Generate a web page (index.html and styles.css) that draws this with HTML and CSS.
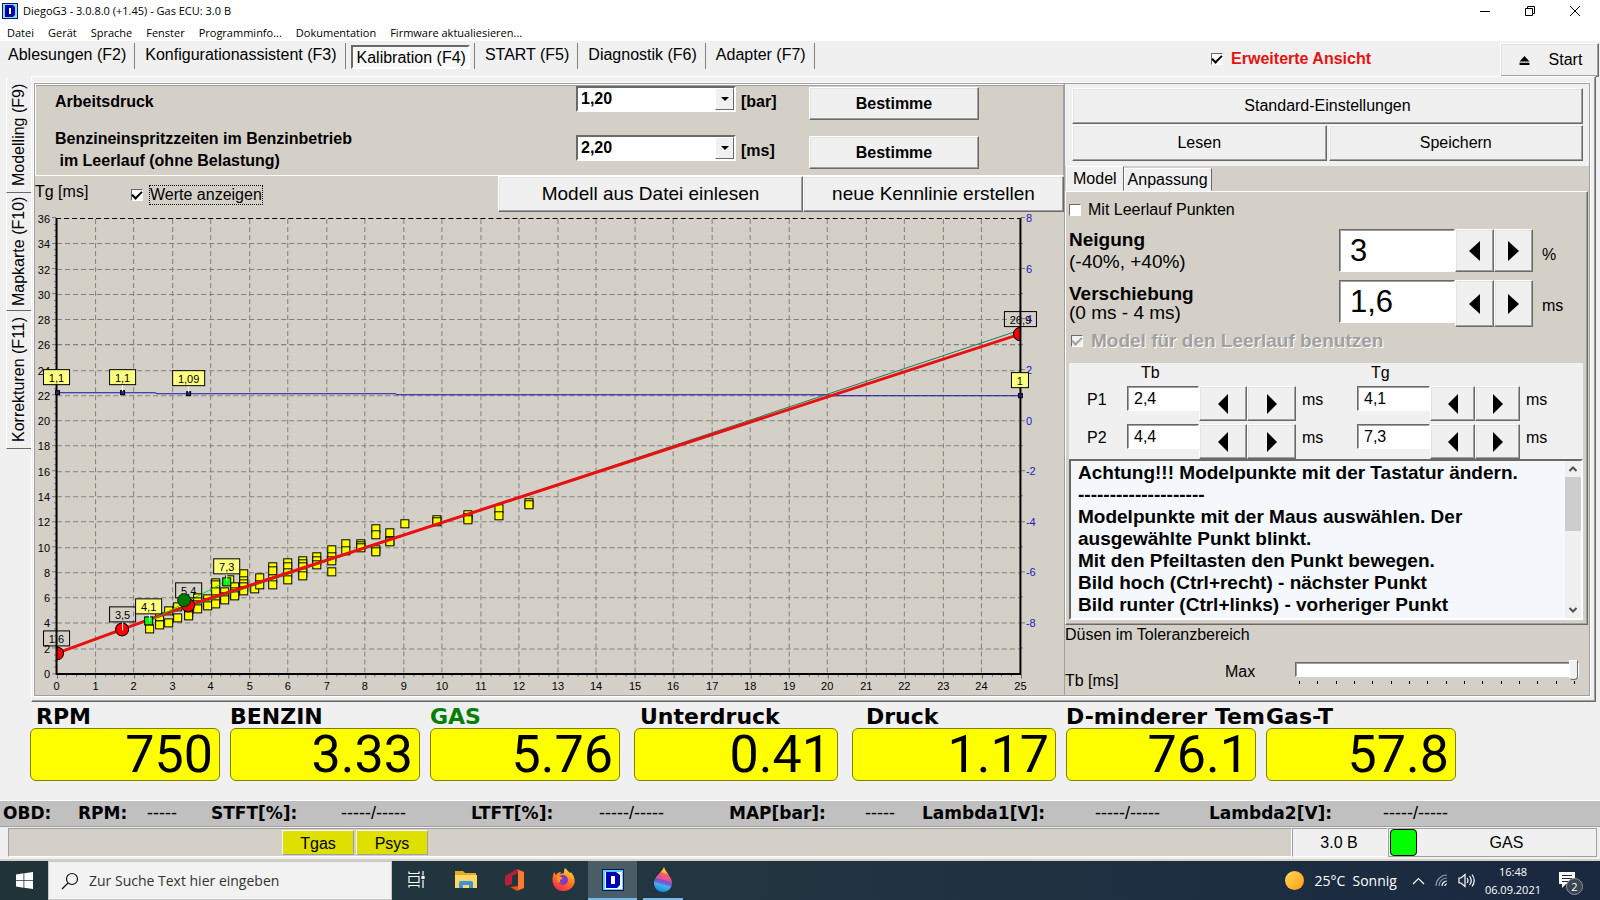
FILE: index.html
```html
<!DOCTYPE html>
<html lang="de">
<head>
<meta charset="utf-8">
<title>DiegoG3 - 3.0.8.0 (+1.45) - Gas ECU: 3.0 B</title>
<link rel="stylesheet" href="styles.css">
</head>
<body>
<header class="titlebar">
  <svg class="app-icon" viewBox="0 0 16 16" aria-hidden="true"><rect width="16" height="16" fill="#0a1670"/><rect x="1" y="1" width="14" height="14" fill="#7fe3f5"/><path fill="#0000b0" fill-rule="evenodd" d="M3 2h8l2 2v8l-2 2H3zM7 5v6h2V5z"/><path fill="#fff" d="M7 5h2v6H7z"/></svg>
  <span class="title">DiegoG3 - 3.0.8.0 (+1.45) - Gas ECU: 3.0 B</span>
  <div class="win-buttons">
    <button aria-label="Minimieren"><svg viewBox="0 0 12 12"><path d="M1 6.5h10"/></svg></button>
    <button aria-label="Wiederherstellen"><svg viewBox="0 0 12 12"><path d="M1.5 3.5h7v7h-7zM3.5 3.5v-2h7v7h-2"/></svg></button>
    <button aria-label="Schließen"><svg viewBox="0 0 12 12"><path d="M1 1l10 10M11 1L1 11"/></svg></button>
  </div>
</header>
<nav class="menubar">
  <button>Datei</button><button>Gerät</button><button>Sprache</button><button>Fenster</button><button>Programminfo...</button><button>Dokumentation</button><button>Firmware aktualiesieren...</button>
</nav>
<div class="toolbar">
  <div class="tool-tabs">
    <button>Ablesungen (F2)</button>
    <button>Konfigurationassistent (F3)</button>
    <button class="pressed"><span>Kalibration (F4)</span></button>
    <button>START (F5)</button>
    <button>Diagnostik (F6)</button>
    <button>Adapter (F7)</button>
  </div>
  <label class="advanced"><input type="checkbox" class="tick" checked>Erweiterte Ansicht</label>
  <button class="btn start"><svg viewBox="0 0 12 10" width="11" height="9"><path d="M6 0l5.500 6H.5zM.5 7.500h11V10H.5z"/></svg>Start</button>
</div>

<main class="workspace">
  <nav class="side-tabs">
    <button class="tab-1">Modelling (F9)</button>
    <button class="tab-2">Mapkarte (F10)</button>
    <button class="tab-3">Korrekturen (F11)</button>
  </nav>
  <div class="page">
    <div class="page-inner">
      <section class="left">
        <div class="params">
          <label class="param-label" for="druck">Arbeitsdruck</label>
          <div class="combo"><select id="druck"><option>1,20</option></select></div>
          <span class="unit">[bar]</span>
          <button class="btn bold">Bestimme</button>
          <label class="param-label two-line" for="zeit">Benzineinspritzzeiten im Benzinbetrieb<br>&nbsp;im Leerlauf (ohne Belastung)</label>
          <div class="combo"><select id="zeit"><option>2,20</option></select></div>
          <span class="unit">[ms]</span>
          <button class="btn bold">Bestimme</button>
        </div>
        <div class="chart-bar">
          <span class="axis-name">Tg [ms]</span>
          <label class="show-values"><input type="checkbox" class="tick" checked><span>Werte anzeigen</span></label>
          <button class="btn load">Modell aus Datei einlesen</button>
          <button class="btn create">neue Kennlinie erstellen</button>
        </div>
        <svg id="chart" class="chart" viewBox="35 213 1028 481" role="img" aria-label="Kennlinie Tb / Tg"></svg>
      </section>

      <section class="right">
        <div class="actions">
          <button class="btn wide">Standard-Einstellungen</button>
          <button class="btn">Lesen</button>
          <button class="btn">Speichern</button>
        </div>
        <div class="model-tabs"><button class="active">Model</button><button>Anpassung</button></div>
        <div class="model-page">
          <label class="idle-points"><input type="checkbox" class="tick">Mit Leerlauf Punkten</label>
          <div class="setting">
            <label for="neigung"><b>Neigung</b><span>(-40%, +40%)</span></label>
            <input id="neigung" type="text" value="3">
            <button class="btn arrow" aria-label="Neigung verringern"><i class="prev"></i></button><button class="btn arrow" aria-label="Neigung erhöhen"><i class="next"></i></button>
            <span class="suffix">%</span>
          </div>
          <div class="setting tall">
            <label for="versch"><b>Verschiebung</b><span>(0 ms - 4 ms)</span></label>
            <input id="versch" type="text" value="1,6">
            <button class="btn arrow" aria-label="Verschiebung verringern"><i class="prev"></i></button><button class="btn arrow" aria-label="Verschiebung erhöhen"><i class="next"></i></button>
            <span class="suffix">ms</span>
          </div>
          <label class="idle-model"><input type="checkbox" class="tick" checked disabled>Model für den Leerlauf benutzen</label>
          <div class="points">
            <span class="col-tb">Tb</span><span class="col-tg">Tg</span>
            <span class="pname">P1</span>
            <input type="text" value="2,4" aria-label="P1 Tb"><button class="btn arrow" aria-label="P1 Tb verringern"><i class="prev"></i></button><button class="btn arrow" aria-label="P1 Tb erhöhen"><i class="next"></i></button><span class="ms">ms</span>
            <input type="text" value="4,1" aria-label="P1 Tg"><button class="btn arrow" aria-label="P1 Tg verringern"><i class="prev"></i></button><button class="btn arrow" aria-label="P1 Tg erhöhen"><i class="next"></i></button><span class="ms">ms</span>
            <span class="pname">P2</span>
            <input type="text" value="4,4" aria-label="P2 Tb"><button class="btn arrow" aria-label="P2 Tb verringern"><i class="prev"></i></button><button class="btn arrow" aria-label="P2 Tb erhöhen"><i class="next"></i></button><span class="ms">ms</span>
            <input type="text" value="7,3" aria-label="P2 Tg"><button class="btn arrow" aria-label="P2 Tg verringern"><i class="prev"></i></button><button class="btn arrow" aria-label="P2 Tg erhöhen"><i class="next"></i></button><span class="ms">ms</span>
          </div>
          <div class="memo">
            <textarea readonly rows="7" aria-label="Hinweise">Achtung!!! Modelpunkte mit der Tastatur ändern.
--------------------
Modelpunkte mit der Maus auswählen. Der ausgewählte Punkt blinkt.
Mit den Pfeiltasten den Punkt bewegen.
Bild hoch (Ctrl+recht) - nächster Punkt
Bild runter (Ctrl+links) - vorheriger Punkt</textarea>
            <div class="scrollbar">
              <svg viewBox="0 0 10 8"><path d="M1.500 6L5 2.500 8.500 6"/></svg>
              <div class="thumb"></div>
              <svg viewBox="0 0 10 8"><path d="M1.500 2L5 5.500 8.500 2"/></svg>
            </div>
          </div>
        </div>
        <div class="tolerance">
          <span class="tol-title">Düsen im Toleranzbereich</span>
          <span class="tol-axis">Tb [ms]</span>
          <label class="tol-max" for="tol">Max</label>
          <div class="slider">
            <input id="tol" type="range" min="0" max="15" value="15">
            <div class="ticks"><i></i><i></i><i></i><i></i><i></i><i></i><i></i><i></i><i></i><i></i><i></i><i></i><i></i><i></i><i></i><i></i></div>
          </div>
        </div>
      </section>
    </div>
  </div>
</main>

<section class="gauges">
  <div class="gauge"><h2 class="in-1">RPM</h2><output>750</output></div>
  <div class="gauge"><h2>BENZIN</h2><output>3.33</output></div>
  <div class="gauge"><h2 class="gas">GAS</h2><output>5.76</output></div>
  <div class="gauge big"><h2 class="in-1">Unterdruck</h2><output>0.41</output></div>
  <div class="gauge big"><h2 class="in-2">Druck</h2><output>1.17</output></div>
  <div class="gauge"><h2>D-minderer Tem</h2><output>76.1</output></div>
  <div class="gauge"><h2>Gas-T</h2><output>57.8</output></div>
</section>

<section class="obd">
  <b>OBD:</b><b>RPM:</b><span>-----</span><b>STFT[%]:</b><span>-----/-----</span><b>LTFT[%]:</b><span>-----/-----</span><b>MAP[bar]:</b><span>-----</span><b>Lambda1[V]:</b><span>-----/-----</span><b>Lambda2[V]:</b><span>-----/-----</span>
</section>

<footer class="status">
  <div class="status-main"><span class="flag">Tgas</span><span class="flag">Psys</span></div>
  <div class="version">3.0 B</div>
  <div class="mode"><i class="lamp"></i><span>GAS</span></div>
</footer>

<nav class="taskbar">
  <button class="win" aria-label="Start"><svg width="17" height="17" viewBox="0 0 17 17"><path fill="#fff" d="M0 2.400L7.500 1.300V8H0zM8.300 1.200L17 0v8H8.300zM0 8.800h7.500v6.900L0 14.600zM8.300 8.800H17V17l-8.700-1.200z"/></svg></button>
  <label class="search"><svg width="18" height="18" viewBox="0 0 18 18"><circle cx="11" cy="7" r="5.500"/><path d="M7 11l-6 6"/></svg><input type="text" placeholder="Zur Suche Text hier eingeben" aria-label="Suche"></label>
  <button class="task" aria-label="Taskansicht"><svg width="17" height="17" viewBox="0 0 17 17" fill="none" stroke="#fff" stroke-width="1.200"><path d="M1 0.500v2h10v-2M1 5.500h10v6H1zM1 16.500v-2h10v2M15 0v4.500M15 9v8"/><path fill="#fff" d="M14 5.500h2v2h-2z"/></svg></button>
  <button class="task" aria-label="Explorer"><svg width="22" height="19" viewBox="0 0 22 19"><path fill="#e8a820" d="M0 1h8l2 2h11v4H0z"/><path fill="#ffd768" d="M0 5h22v13H0z"/><path fill="#3a95d8" d="M4 18v-5a2 2 0 0 1 2-2h10a2 2 0 0 1 2 2v5h-4v-3H8v3z"/></svg></button>
  <button class="task" aria-label="Office"><svg width="19" height="22" viewBox="0 0 19 22"><path fill="#e8500e" d="M12 0l7 3v16l-7 3-7-4 8-1V4z"/><path fill="#ba1d3d" d="M12 0L13 4 7 7v8l-5 2-2-2V7z"/><path fill="#ff7a30" d="M13 1l6 2v16l-6 2z"/></svg></button>
  <button class="task" aria-label="Firefox"><svg width="23" height="23" viewBox="0 0 23 23"><defs><linearGradient id="ff" x1=".8" y1="0" x2=".3" y2="1"><stop offset="0" stop-color="#ffe03a"/><stop offset=".5" stop-color="#ff7a20"/><stop offset="1" stop-color="#f2284e"/></linearGradient></defs><path fill="url(#ff)" d="M13 0c2 2 3 3 5 5 1-1 2 0 3 2 5 9-2 16-10 16C3 23-1 15 1 8l1-4 2 3c1-2 3-3 5-3l-1 2 4-1c0-2 0-3 1-5z"/><circle cx="11" cy="12" r="5" fill="#8038c8"/><path fill="#ff9426" d="M5 8c3 0 5 1 6 3-3 0-4 2-2 4-3 0-5-3-4-7z"/></svg></button>
  <button class="task current" aria-label="DiegoG3"><svg width="22" height="22" viewBox="0 0 22 22"><path fill="#04105c" d="M0 0h22v22H0z"/><path fill="#55d5f5" d="M1 1h20v20H1z"/><path fill="#fff" d="M3 3h17v17H3z"/><path fill="#0000b8" fill-rule="evenodd" d="M4 3h10l4 3v10l-3 3H4zM9 7v8h4V7z"/></svg></button>
  <button class="task running" aria-label="Paint 3D"><svg width="20" height="25" viewBox="0 0 20 25"><defs><linearGradient id="pt" x1=".6" y1="0" x2=".4" y2="1"><stop offset="0" stop-color="#ffd52e"/><stop offset=".2" stop-color="#ffc020"/><stop offset=".28" stop-color="#f55a78"/><stop offset=".48" stop-color="#e85288"/><stop offset=".54" stop-color="#7058c8"/><stop offset=".66" stop-color="#8060d0"/><stop offset=".72" stop-color="#3cb8f0"/><stop offset="1" stop-color="#1686e0"/></linearGradient></defs><path fill="url(#pt)" d="M11 0c2 6 8 10 8 16 0 5-4 9-9 9s-9-4-9-9C1 9 9 6 11 0z"/></svg></button>
  <div class="tray">
    <i class="sun"></i><span class="weather">25°C&nbsp; Sonnig</span>
    <svg width="13" height="8" viewBox="0 0 13 8"><path d="M1 7l5.500-5.500L12 7"/></svg>
    <svg width="13" height="13" viewBox="0 0 13 13"><g opacity=".5"><path d="M1 12A11 11 0 0 1 12 1M4 12a8 8 0 0 1 8-8"/></g><path d="M7 12a5 5 0 0 1 5-5M10 12a2 2 0 0 1 2-2"/></svg>
    <svg width="17" height="15" viewBox="0 0 17 15"><path d="M1 5v5h2l4 3.500v-12L3 5zM9 5q2 2.500 0 5M11.500 3q3.500 4.500 0 9M14 1.500q4.500 6 0 12"/></svg>
    <div class="clock"><span>16:48</span><span>06.09.2021</span></div>
    <div class="notify"><svg width="16" height="17" viewBox="0 0 16 17"><path fill="#fff" stroke="none" d="M0 0h16v12H7l-4 4v-4H0z"/><path stroke="#1b2b3c" d="M3 3.500h10M3 6.500h10M3 9.500h6"/></svg><span class="count">2</span></div>
  </div>
</nav>
<script src="chart.js"></script>
</body>
</html>
```

FILE: styles.css
```css
* { box-sizing: border-box; }
body {
  margin: 0;
  min-height: 100vh;
  display: flex;
  flex-direction: column;
  background: #f0f0f0;
  color: #000;
  font: 16px/20px "Liberation Sans", Arial, sans-serif;
  overflow-x: hidden;
}
button, input, select, textarea { font: inherit; color: inherit; margin: 0; }
button { background: none; border: 0; padding: 0; white-space: nowrap; }

/* window frame */
.titlebar { display: flex; align-items: center; height: 22px; background: #fff; padding-left: 2px; font: 12px/22px "Open Sans", "Noto Sans", sans-serif; }
.title { font-size: 11px; }
.app-icon { width: 16px; height: 16px; margin-right: 5px; }
.win-buttons { display: flex; margin-left: auto; gap: 33px; padding-right: 19px; }
.win-buttons button { width: 12px; height: 12px; display: flex; }
.win-buttons svg { width: 12px; height: 12px; fill: none; stroke: #000; }
.menubar { display: flex; gap: 14px; height: 19px; padding-left: 7px; background: #fff; font: 11px/22px "Open Sans", "Noto Sans", sans-serif; }

.toolbar { display: flex; align-items: flex-start; height: 35px; padding-top: 2px; }
.tool-tabs { display: flex; }
.tool-tabs button { height: 26px; padding: 0 8px 2px 10px; border-right: 1px solid #808080; line-height: 24px; }
.tool-tabs button:first-child { padding-left: 8px; }
.tool-tabs button.pressed { padding: 1px 4px 0 5px; }
.tool-tabs .pressed span { display: block; height: 24px; padding: 0 2px 0 4px; border: 2px solid; border-color: #696969 #fff #fff #696969; background: #f8f8f8; line-height: 22px; }
.advanced { display: flex; align-items: center; gap: 8px; height: 32px; margin-left: auto; margin-right: 129px; color: #e81010; font-weight: bold; }
.btn {
  background: #f0f0f0;
  border: 1px solid;
  border-color: #fff #696969 #696969 #fff;
  box-shadow: inset -1px -1px #a0a0a0, inset 1px 1px #e3e3e3;
  text-align: center;
}
.bold { font-weight: bold; }
.start { width: 99px; height: 34px; margin-right: 1px; padding-left: 2px; }
.start svg { margin-right: 19px; }
.tick { appearance: none; width: 12px; height: 12px; flex: none; background: #fff; border: 1px solid; border-color: #696969 #fff #fff #696969; }
.tick:checked { display: grid; place-items: center; }
.tick:checked::before { content: ""; width: 8px; height: 4px; border: solid #000; border-width: 0 0 2px 2px; transform: translateY(-1px) rotate(-45deg); }
.tick:disabled { background: #f0f0f0; }
.tick:disabled::before { border-color: #a0a0a0; }

/* workspace */
.workspace { display: flex; padding: 0 4px 0 6px; }
.side-tabs { display: flex; flex-direction: column; width: 25px; padding-top: 1px; }
.side-tabs button { writing-mode: vertical-rl; transform: rotate(180deg); width: 25px; border-right: 1px solid #fff; border-top: 1px solid #696969; line-height: 24px; }
.side-tabs .tab-1 { height: 116px; }
.side-tabs .tab-2 { height: 118px; }
.side-tabs .tab-3 { height: 138px; }
.page { flex: 1; min-width: 0; border: 1px solid; border-color: #fff #696969 #696969 #fff; box-shadow: inset -1px -1px #a0a0a0; padding: 6px 5px 5px 2px; }
.page-inner { display: grid; grid-template-columns: minmax(0, 1fr) 524px; border: 1px solid #a0a0a0; outline: 1px solid #fff; }
.left { background: #d4d0c8; min-width: 0; border-right: 1px solid #a0a0a0; }
.params {
  display: grid;
  grid-template-columns: 521px 160px 73px 170px;
  grid-template-rows: 36px 40px;
  row-gap: 13px;
  align-items: start;
  padding: 1px 0 0 19px;
  border: 1px solid #fff;
  border-right-color: #a0a0a0;
  box-shadow: inset 0 1px #a0a0a0;
  font-weight: bold;
  line-height: 22px;
}
.param-label, .unit { margin-top: 5px; }
.param-label.two-line { margin-top: -7px; }
.combo { position: relative; height: 26px; }
.combo select { appearance: none; width: 100%; height: 26px; padding: 0 3px; background: #fff; border: 2px solid; border-color: #696969 #fff #fff #696969; font-weight: bold; border-radius: 0; }
.combo::after { content: ""; position: absolute; top: 2px; right: 2px; width: 17px; bottom: 2px; border: 1px solid; border-color: #fff #696969 #696969 #fff; background: #f0f0f0; pointer-events: none; }
.combo::before { content: ""; position: absolute; z-index: 1; top: 11px; right: 7px; border: 4px solid transparent; border-top-color: #000; border-bottom: 0; pointer-events: none; }
.unit { padding-left: 5px; }
.params .btn { height: 33px; margin-top: 1px; }
.chart-bar { display: flex; height: 36px; }
.axis-name { line-height: 32px; width: 96px; }
.show-values { display: flex; align-items: center; gap: 6px; padding-top: 2px; }
.show-values span { border: 1px dotted #000; line-height: 18px; }
.chart-bar .btn { font-size: 19px; }
.load { width: 305px; margin-left: auto; }
.create { width: 261px; }
.chart { display: block; width: 100%; }
.chart text { font: 11px "Liberation Sans", Arial, sans-serif; }
.chart .mid { text-anchor: middle; }
.chart .end { text-anchor: end; }
.chart .blue { fill: #2020c0; }
.chart .grid { stroke: #808080; stroke-dasharray: 5 3; fill: none; }
.chart .sample { fill: #ff0; stroke: #000; }

/* right column */
.right { display: flex; flex-direction: column; min-width: 0; background: #d4d0c8; }
.actions { display: grid; grid-template-columns: 1fr 1fr; gap: 1px 2px; padding: 4px 6px 5px 7px; background: #f0f0f0; }
.actions .btn { height: 36px; }
.actions .wide { grid-column: 1 / -1; }
.model-tabs { display: flex; align-items: flex-end; height: 25px; padding-left: 1px; }
.model-tabs button { height: 23px; padding: 0 3px; background: #f0f0f0; border: 1px solid; border-color: #fff #696969 transparent #fff; line-height: 22px; }
.model-tabs .active { height: 25px; padding: 0 6px; }
.model-page { border: 1px solid; border-color: #fff #696969 #696969 #fff; box-shadow: inset -1px -1px #a0a0a0; padding: 8px 4px 4px 3px; margin-right: 1px; }
.idle-points { display: flex; align-items: center; gap: 7px; height: 20px; }
.setting { display: grid; grid-template-columns: 1fr 116px 39px 39px 50px; align-items: start; height: 51px; margin-top: 9px; }
.setting.tall { margin-top: 0; height: 49px; }
.setting label { display: flex; flex-direction: column; font-size: 19px; line-height: 22px; }
.setting.tall label { line-height: 19px; padding-top: 4px; }
.model-page input[type="text"] { min-width: 0; background: #fff; border: 1px solid; border-color: #696969 #fff #fff #696969; box-shadow: inset 1px 1px #a0a0a0; border-radius: 0; }
.setting input[type="text"] { height: 43px; padding: 0 10px; font-size: 31px; }
.setting .btn { height: 43px; }
.setting.tall .btn { height: 47px; }
.suffix { padding: 16px 0 0 9px; }
.arrow { display: grid; place-items: center; }
.arrow i { border: solid transparent; border-width: 10px 11px; }
.arrow .prev { border-right-color: #000; border-left: 0; }
.arrow .next { border-left-color: #000; border-right: 0; }
.idle-model { display: flex; align-items: center; gap: 8px; height: 24px; padding-left: 2px; color: #a0a0a0; font-weight: bold; font-size: 19px; text-shadow: 1px 1px #fff; }
.points {
  display: grid;
  grid-template-columns: 58px 72px 48px 49px 61px 73px 45px 45px 1fr;
  grid-template-rows: 20px 35px 35px;
  row-gap: 3px;
  align-items: start;
  margin-top: 10px;
  background: #f0f0f0;
}
.col-tb { grid-column: 2 / 6; padding-left: 14px; }
.col-tg { grid-column: 6 / 10; padding-left: 14px; }
.pname { padding: 4px 0 0 18px; }
.points input[type="text"] { width: 100%; height: 25px; padding: 0 6px; }
.points .btn { height: 35px; }
.points .arrow i { border-width: 10px; }
.points .arrow .prev { border-left: 0; }
.points .arrow .next { border-right: 0; }
.ms { padding: 4px 0 0 6px; }
.memo { display: flex; height: 161px; background: #f4f8fd; border: 2px solid; border-color: #696969 #fff #fff #696969; }
.memo textarea { flex: 1; min-width: 0; border: 0; resize: none; background: none; padding: 1px 7px; font-weight: bold; font-size: 19px; line-height: 22px; overflow: hidden; outline: 0; }
.scrollbar { display: flex; flex-direction: column; align-items: center; width: 16px; background: #f0f0f0; }
.scrollbar svg { width: 10px; height: 16px; fill: none; stroke: #505050; stroke-width: 2; }
.thumb { width: 100%; height: 54px; margin-bottom: auto; background: #cdcdcd; }
.tolerance { display: grid; grid-template-columns: 160px 70px 1fr; grid-template-rows: 28px 42px; padding: 0 6px 0 0; }
.tol-title { grid-column: 1 / -1; }
.tol-axis { padding-top: 18px; }
.tol-max { padding-top: 9px; }
.slider { padding-top: 6px; margin-right: 4px; }
.slider input { appearance: none; display: block; width: 100%; height: 20px; background: none; }
.slider input::-webkit-slider-runnable-track { height: 15px; background: #fff; border: 1px solid; border-color: #696969 #fff #fff #696969; box-shadow: inset 1px 1px #a0a0a0; }
.slider input::-webkit-slider-thumb { appearance: none; width: 9px; height: 20px; margin-top: -3px; background: #f0f0f0; border: 1px solid; border-color: #fff #696969 #696969 #fff; border-radius: 0 0 4px 4px; }
.ticks { display: flex; justify-content: space-between; padding: 2px 4px 0; }
.ticks i { width: 1px; height: 3px; background: #000; }

/* gauges */
.gauges { display: flex; gap: 10px; padding: 3px 0 19px 30px; }
.gauge { width: 190px; min-width: 0; }
.gauge.big { width: 204px; margin-left: 4px; }
.gauge.big + .gauge:not(.big) { margin-left: 0; }
.gauge h2 { margin: 0; height: 23px; white-space: nowrap; font: bold 22px/24px "DejaVu Sans", Verdana, sans-serif; }
.gauge .in-1 { padding-left: 6px; }
.gauge .in-2 { padding-left: 14px; }
.gauge .gas { color: #008000; }
.gauge output { display: block; height: 53px; padding-right: 6px; background: #ff0; border: 1px solid #808000; border-radius: 6px; text-align: right; font: 400 52px/52px Roboto, sans-serif; }

.obd { display: grid; grid-template-columns: 75px 69px 64px 130px 130px 128px 130px 136px 57px 173px 114px 174px 1fr; height: 27px; padding-left: 3px; background: #c0c0c0; border-top: 1px solid #fff; border-bottom: 1px solid #a0a0a0; font-size: 18px; line-height: 25px; white-space: nowrap; }
.obd b { font: bold 17px/25px "DejaVu Sans", Verdana, sans-serif; }

.status { display: flex; height: 34px; padding: 1px 3px 2px 8px; background: #f0f0f0; border-bottom: 2px solid #d4d0c8; line-height: 28px; }
.status-main { display: flex; gap: 2px; flex: 1; padding: 1px 0 1px 273px; background: #d4d0c8; border: 1px solid; border-color: #a0a0a0 #fff #fff #a0a0a0; }
.flag { width: 72px; background: #dfdf00; border: 1px solid; border-color: #fff #a0a0a0 #a0a0a0 #fff; line-height: 25px; text-align: center; }
.version { width: 96px; padding-right: 2px; border: 1px solid; border-color: #a0a0a0 #fff #fff #a0a0a0; text-align: center; }
.mode { display: flex; align-items: center; width: 209px; border: 1px solid #a0a0a0; }
.mode span { flex: 1; text-align: center; }
.lamp { width: 27px; height: 27px; margin-left: 1px; background: #0f0; border: 1px solid #000; border-radius: 4px; }

/* taskbar */
.taskbar { display: flex; flex: 1 0 39px; background: linear-gradient(90deg, #203339, #213641 45%, #1a2840); color: #fff; font: 14px/18px "Open Sans", "Noto Sans", sans-serif; }
.taskbar button { display: grid; place-items: center; }
.win { width: 48px; }
.search { display: flex; align-items: center; gap: 8px; width: 344px; padding-left: 12px; background: #f2f2f2; border: 1px solid #c8c8c8; color: #333; }
.search svg { fill: none; stroke: #111; stroke-width: 1.2; }
.search input { flex: 1; min-width: 0; padding: 0 2px; border: 0; background: none; outline: 0; }
.search input::placeholder { color: #333; opacity: 1; }
.task { width: 49px; border-bottom: 2px solid transparent; }
.task.current { background: #4a5d66; border-color: #76b9ed; }
.task.running { border-color: #76b9ed; width: 40px; margin-left: 6px; }
.tray { display: flex; align-items: center; gap: 10px; margin-left: auto; padding-right: 17px; }
.tray svg { fill: none; stroke: #fff; stroke-width: 1.2; }
.sun { width: 19px; height: 19px; border-radius: 50%; background: linear-gradient(135deg, #ffd75a, #ff9d10); }
.weather { margin-right: 5px; }
.clock { display: flex; flex-direction: column; align-items: center; font-size: 11px; }
.notify { position: relative; display: flex; margin-left: 8px; padding-right: 8px; }
.count { position: absolute; right: 0; top: 6px; width: 17px; height: 17px; border-radius: 50%; background: #3a4550; border: 1px solid #8a949c; font-size: 11px; line-height: 15px; text-align: center; }
```

FILE: chart.js
```javascript
(function () {
  var svg = document.getElementById("chart");
  var X0 = 56.5, Y0 = 674.5, UX = 38.52, UY = 12.64;
  var out = [];
  function px(v) { return Math.round(X0 + v * UX - 0.5) + 0.5; }
  function py(v) { return Math.round(Y0 - v * UY - 0.5) + 0.5; }
  function line(x1, y1, x2, y2, attrs) {
    out.push('<line x1="' + x1 + '" y1="' + y1 + '" x2="' + x2 + '" y2="' + y2 + '" ' + attrs + '/>');
  }
  function text(x, y, cls, s) {
    out.push('<text x="' + x + '" y="' + y + '" class="' + cls + '">' + s + '</text>');
  }
  function tag(x, y, w, fill, s) {
    out.push('<rect x="' + (x - w / 2) + '" y="' + y + '" width="' + w + '" height="15" fill="' + fill + '" stroke="#000"/>');
    text(x, y + 12, "mid", s);
  }
  var i;
  for (i = 1; i < 25; i++) line(px(i), 220, px(i), 674, 'class="grid"');
  for (i = 2; i < 36; i += 2) line(57, py(i), 1019, py(i), 'class="grid"');
  line(56, 219.5, 1019, 219.5, 'stroke="#000" stroke-dasharray="5 3"');
  for (i = 0; i <= 100; i++) {
    var tx = Math.round(X0 + i * UX / 4) + 0.5;
    line(tx, 675, tx, i % 4 ? 677 : 679, 'stroke="#666"');
  }
  for (i = 0; i <= 72; i++) {
    var ty = Math.round(Y0 - i * UY / 2) - 0.5;
    line(i % 4 ? 54 : 52, ty, 56, ty, 'stroke="#777"');
  }
  for (i = -9; i <= 8; i++) {
    var ry = Math.round(421.5 - i * 25.27) - 0.5;
    line(1020, ry, i % 2 ? 1022 : 1024, ry, 'stroke="#777"');
  }
  line(56.5, 219, 56.5, 675, 'stroke="#000" stroke-width="2"');
  line(1019.5, 219, 1019.5, 675, 'stroke="#000" stroke-width="2"');
  line(56, 674.5, 1020, 674.5, 'stroke="#000" stroke-width="2"');
  for (i = 0; i <= 25; i++) text(px(i), 691, "mid", i);
  for (i = 0; i <= 36; i += 2) text(50, py(i) + 4, "end", i);
  for (i = -8; i <= 8; i += 2) text(1025, Math.round(421.5 - i * 25.27) + 4, "blue", i);

  /* collected samples: x, then the centres of the boxes above it */
  var samples = [
    [149, 629], [159, 617, 625], [168, 611, 623], [177, 607, 618], [188, 610, 613, 616],
    [197, 598, 605, 609], [207, 599, 603, 606], [215, 583, 585, 592, 599, 604],
    [224, 592, 597, 600], [229, 580], [234, 587, 592, 594, 596], [243, 574, 581, 584, 587, 591],
    [254, 589], [259, 578, 585], [272, 567, 571, 579, 585], [287, 563, 567, 573, 580],
    [302, 561, 564, 567, 573, 576], [316, 557, 561, 565], [331, 550, 557, 561, 572],
    [345, 544, 551], [360, 544, 546, 548], [375, 529, 535, 550, 552], [389, 533, 541, 542],
    [404, 524], [436, 520, 522], [467, 515, 518, 520], [498, 509, 516], [528, 503, 505]
  ];
  samples.forEach(function (s) {
    s.slice(1).forEach(function (y) {
      out.push('<rect class="sample" x="' + (s[0] - 3.5) + '" y="' + (y - 3.5) + '" width="8" height="8"/>');
    });
  });

  out.push('<polyline points="57,393.5 155,393.5 157,394.5 395,394.5 397,395.5 828,395.5 830,396.5 1019,396.5" fill="none" stroke="#1010b0"/>');
  [[57, 393], [122, 393], [188, 394], [1019, 396]].forEach(function (p) {
    out.push('<rect x="' + (p[0] - 1.5) + '" y="' + (p[1] - 1.5) + '" width="4" height="4" fill="#228" stroke="#000"/>');
  });
  line(149, 621, 1019, 331, 'stroke="#207850"');
  out.push('<polyline points="56.500,654 122,630 188,606 1019,335" fill="none" stroke="#e81010" stroke-width="3"/>');
  line(149, 622, 226, 582, 'stroke="#20d020"');
  out.push('<path d="M57 647.500a6.500 6.500 0 0 1 0 13z" fill="#f00" stroke="#000"/>');
  out.push('<path d="M1019 328.500a6.500 6.500 0 0 0 0 13z" fill="#f00" stroke="#000"/>');
  out.push('<circle cx="122" cy="630" r="6.500" fill="#f00" stroke="#000"/>');
  out.push('<circle cx="188" cy="606" r="6.500" fill="#f00" stroke="#000"/>');
  out.push('<rect x="144.500" y="617.500" width="8" height="8" fill="#0f0" stroke="#000"/>');
  out.push('<rect x="222.500" y="578.500" width="8" height="8" fill="#0f0" stroke="#000"/>');
  tag(56.5, 631.5, 26, "none", "1,6");
  tag(122.5, 607.5, 26, "none", "3,5");
  tag(188.5, 583.5, 26, "none", "5,4");
  out.push('<circle cx="184" cy="601" r="6.500" fill="#007800" stroke="#030"/>');
  tag(1019.5, 312.5, 32, "none", "26,9");
  tag(148.5, 599.5, 26, "#ffff80", "4,1");
  tag(226.5, 559.5, 26, "#ffff80", "7,3");
  tag(56.5, 370.5, 26, "#ffff80", "1,1");
  tag(122.5, 370.5, 26, "#ffff80", "1,1");
  tag(188.5, 371.5, 32, "#ffff80", "1,09");
  tag(1019, 373.5, 17, "#ffff80", "1");
  [[122.5, 386, 392], [188.5, 387, 393], [122.5, 623, 631], [149.5, 615, 622], [226.5, 575, 582]].forEach(function (s) {
    line(s[0], s[1], s[0], s[2], 'stroke="#fff"');
  });
  svg.innerHTML = out.join("");
})();
```
